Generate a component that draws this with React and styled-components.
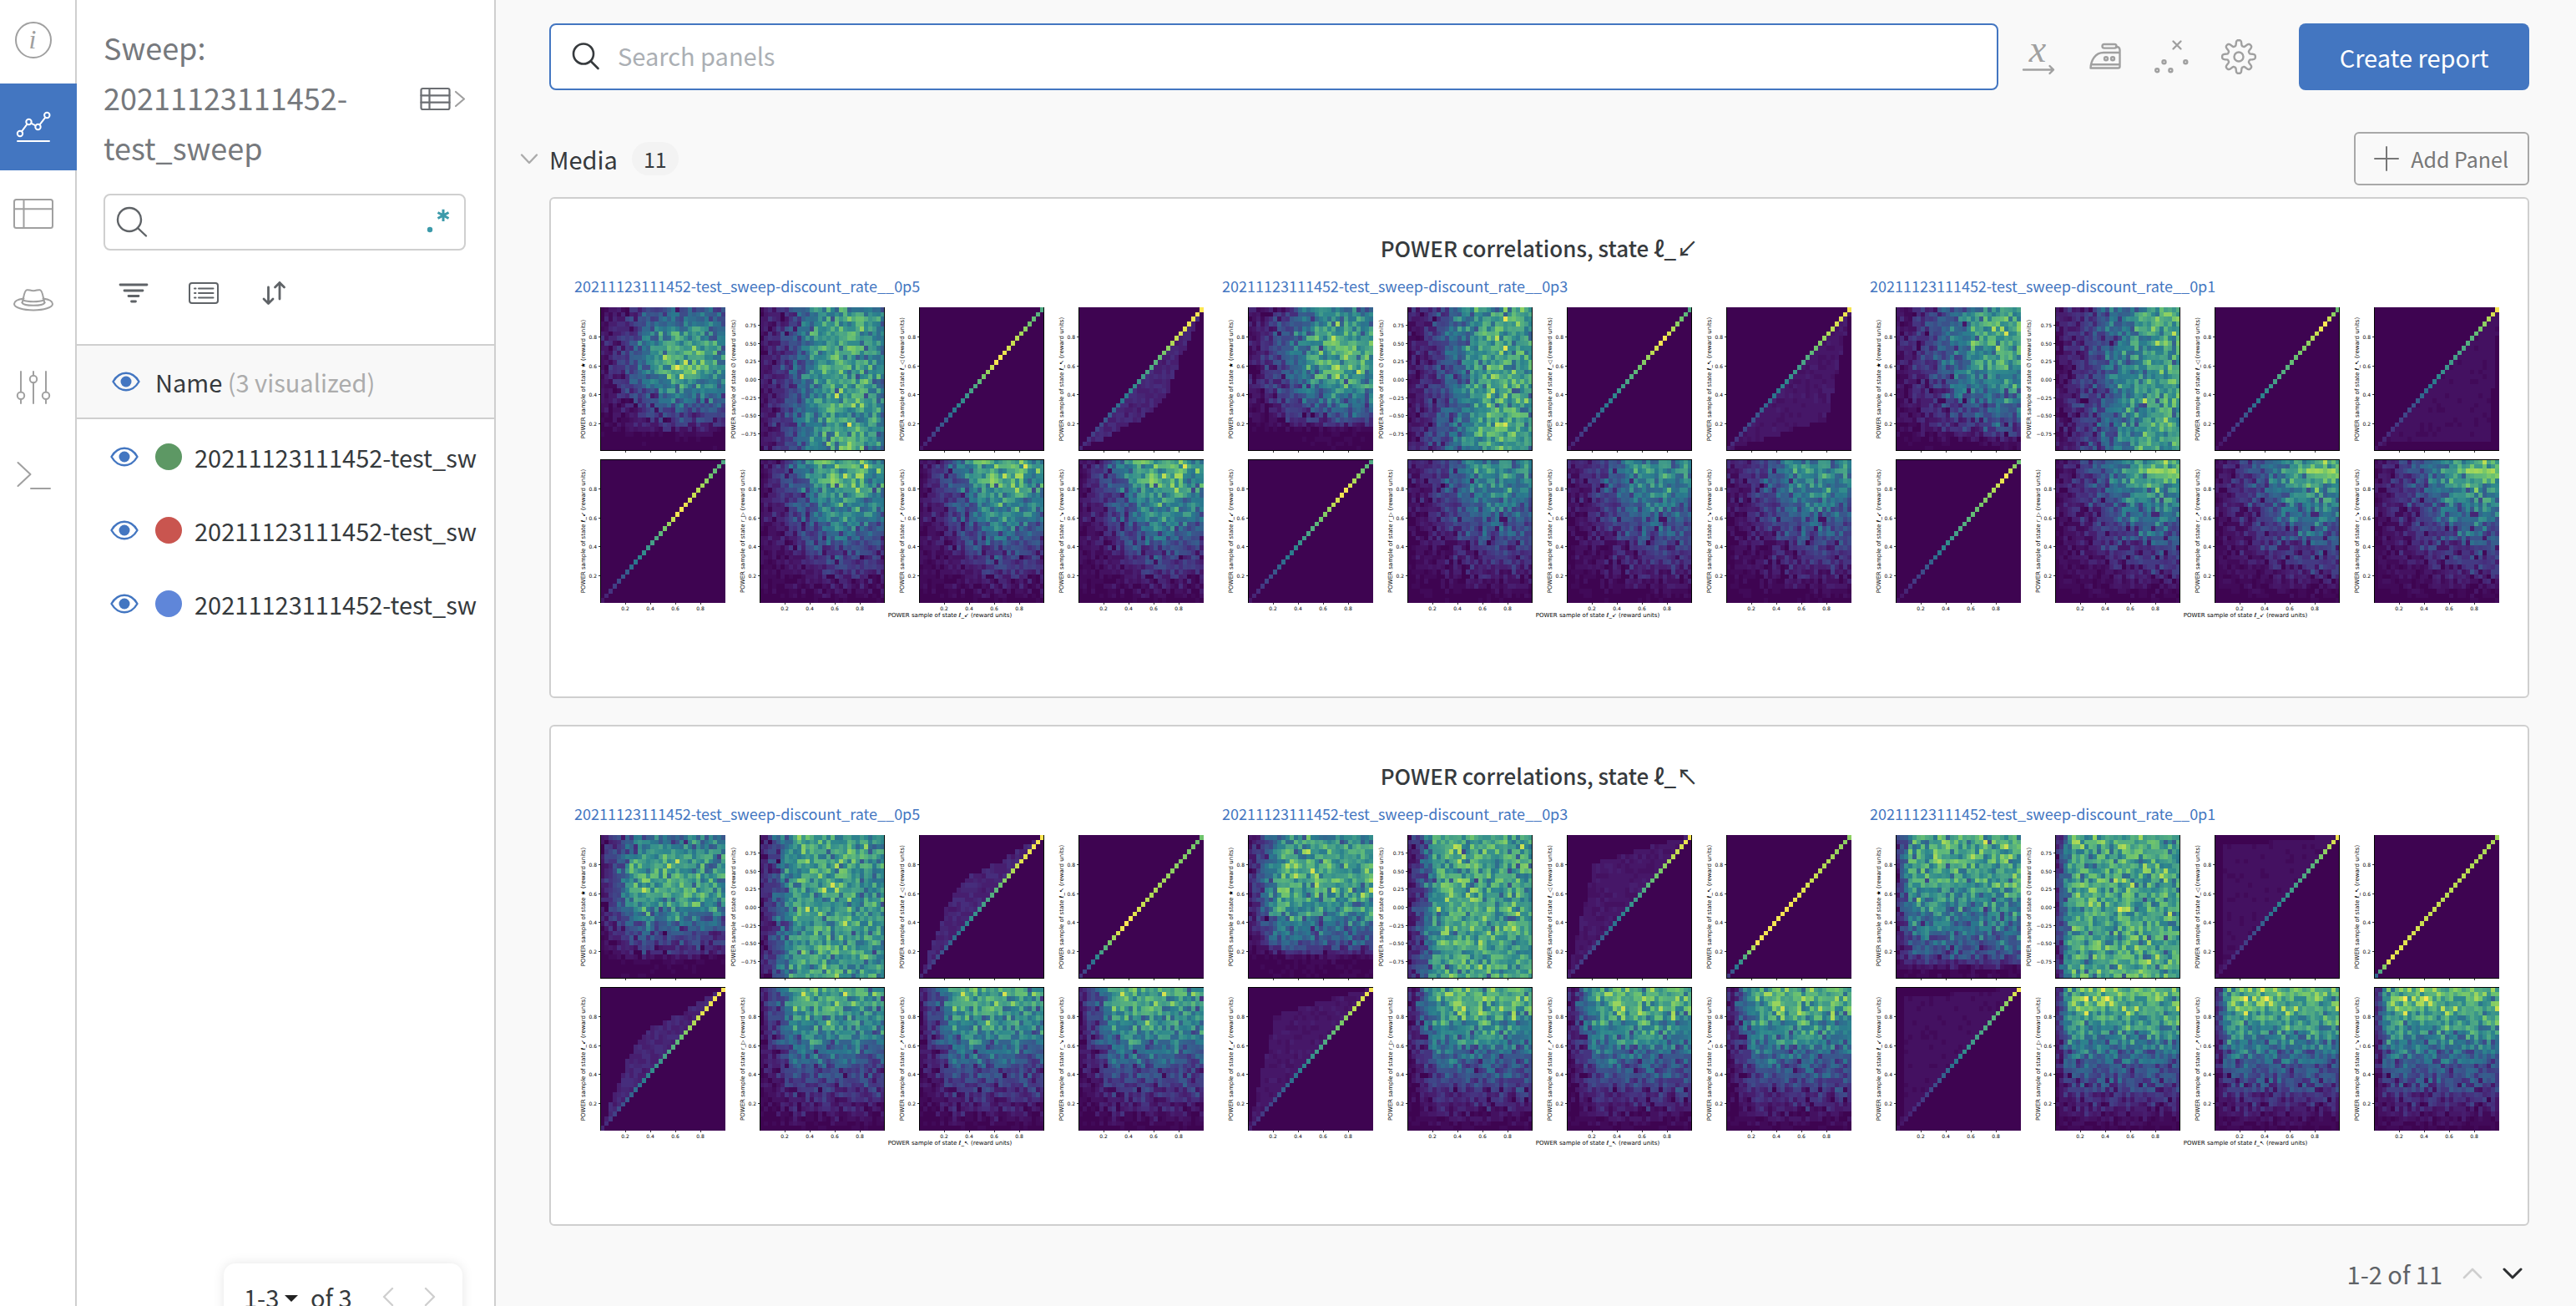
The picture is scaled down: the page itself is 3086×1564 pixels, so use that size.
import React from "react";
import styled, { createGlobalStyle } from "styled-components";

/* ---------- theme values ---------- */

const font = '"Noto Sans CJK SC", "Noto Sans", sans-serif';
const c = {
  blue: "#4376c1",
  line: "#cfcfcf",
  page: "#f9f9f9",
  ink: "#363a3d",
  mid: "#5f6367",
  soft: "#76797d",
  icon: "#a0a0a0",
};

const Global = createGlobalStyle`
  *, *::before, *::after { box-sizing: border-box; }
  body { margin: 0; background: ${c.page}; font-family: ${font}; color: ${c.ink}; }
  button, input, select { font: inherit; color: inherit; }
  svg { display: block; flex: none; overflow: visible; }
`;

/* ---------- heat map data ---------- */

const N = 30;
const VIRIDIS = [
  [62, 4, 81], [71, 24, 106], [70, 48, 126], [64, 68, 135], [57, 86, 140],
  [49, 104, 142], [42, 120, 142], [47, 137, 141], [62, 152, 138], [78, 168, 132],
  [94, 184, 122], [112, 196, 108], [145, 210, 96], [182, 220, 84], [224, 227, 78], [254, 230, 84],
];

function viridis(t) {
  const x = Math.min(1, Math.max(0, t)) * (VIRIDIS.length - 1);
  const i = Math.min(VIRIDIS.length - 2, Math.floor(x));
  const f = x - i;
  const mix = VIRIDIS[i].map((v, k) => Math.round(v + (VIRIDIS[i + 1][k] - v) * f));
  return `rgb(${mix.join(",")})`;
}

function random(seed) {
  let a = seed >>> 0;
  return () => {
    a = (a + 0x6d2b79f5) >>> 0;
    let t = a;
    t = Math.imul(t ^ (t >>> 15), t | 1);
    t ^= t + Math.imul(t ^ (t >>> 7), t | 61);
    return ((t ^ (t >>> 14)) >>> 0) / 4294967296;
  };
}

const bell = (x, [m, left, right]) => Math.exp(-(((x - m) / (x < m ? left : right)) ** 2) / 2);

function lerp(points, x) {
  for (let i = 1; i < points.length; i++) {
    const [x0, y0] = points[i - 1];
    const [x1, y1] = points[i];
    if (x <= x1) return y0 + ((y1 - y0) * (x - x0)) / (x1 - x0);
  }
  return points[points.length - 1][1];
}

function scatter(seed, density, amp) {
  const rnd = random(seed);
  const cells = [];
  for (let j = 0; j < N; j++) {
    for (let i = 0; i < N; i++) {
      const noise = rnd() + rnd() + rnd() + rnd() - 2;
      const d = density((i + 0.5) / N, (j + 0.5) / N);
      cells.push(Math.max(0, amp * d + noise * 0.3 * Math.sqrt(d * amp)));
    }
  }
  return cells;
}

function diagonal(seed, ramp, hull) {
  const rnd = random(seed);
  const cells = [];
  for (let j = 0; j < N; j++) {
    for (let i = 0; i < N; i++) {
      const x = (i + 0.5) / N;
      const y = (j + 0.5) / N;
      let v = 0;
      if (i === j) v = lerp(ramp, x);
      else if (hull) {
        const a = hull.above ? y : x;
        const b = hull.above ? x : y;
        if (a > b && b > lerp(hull.edge, a)) v = hull.level * (0.7 + rnd() * 0.6);
      }
      cells.push(v);
    }
  }
  return cells;
}

const RUNS = [
  { id: "0p5", name: "20211123111452-test_sweep-discount_rate__0p5", color: "#5d9864" },
  { id: "0p3", name: "20211123111452-test_sweep-discount_rate__0p3", color: "#c9554f" },
  { id: "0p1", name: "20211123111452-test_sweep-discount_rate__0p1", color: "#5f86d9" },
];

const HULLS = [
  { level: 0.1, edge: [[0, 0], [0.5, 0.22], [0.7, 0.37], [0.8, 0.62], [1, 1]] },
  { level: 0.06, edge: [[0, 0], [0.8, 0.22], [0.9, 0.6], [1, 1]] },
  { level: 0.04, edge: [[0, 0], [0.1, 0.05], [0.92, 0.07], [1, 1]] },
];

const PANELS = [
  {
    key: "dl", arrow: "↙", spread: [3],
    x: [[0.66, 0.28, 0.38], [0.76, 0.34, 0.36], [0.9, 0.4, 0.3]],
    y: [[0.62, 0.24, 0.28], [0.64, 0.28, 0.36], [0.84, 0.48, 0.25]],
    center: [0.66, 0.66, 0.62],
    amp: [0.68, 0.5, 0.64],
    plain: [
      [[0, 0.05], [0.2, 0.28], [0.45, 0.6], [0.63, 1], [0.8, 0.85], [1, 0.58]],
      [[0, 0.05], [0.2, 0.25], [0.5, 0.6], [0.77, 1], [0.9, 0.75], [1, 0.58]],
      [[0, 0.03], [0.2, 0.2], [0.5, 0.58], [0.75, 0.8], [0.88, 1], [1, 0.65]],
    ],
    wide: [
      [[0, 0.08], [0.3, 0.34], [0.6, 0.62], [0.8, 0.92], [1, 1]],
      [[0, 0.08], [0.3, 0.32], [0.6, 0.56], [0.8, 0.84], [1, 1]],
      [[0, 0.04], [0.3, 0.24], [0.6, 0.54], [0.8, 0.66], [1, 1]],
    ],
  },
  {
    key: "ul", arrow: "↖", spread: [2, 4],
    x: [[0.38, 0.18, 0.9], [0.32, 0.15, 1.8], [0.16, 0.08, 3]],
    y: [[0.66, 0.25, 0.33], [0.7, 0.34, 0.36], [0.88, 0.52, 0.5]],
    center: [0.62, 0.62, 0.6],
    amp: [0.62, 0.64, 0.66],
    plain: [
      [[0, 0.1], [0.1, 0.32], [0.3, 0.88], [0.37, 1], [0.6, 0.85], [1, 0.72]],
      [[0, 0.1], [0.1, 0.45], [0.25, 0.98], [0.5, 0.98], [0.8, 0.85], [1, 0.78]],
      [[0, 0.2], [0.05, 0.6], [0.12, 0.96], [0.4, 0.9], [1, 0.84]],
    ],
    wide: [
      [[0, 0.08], [0.3, 0.36], [0.6, 0.64], [0.8, 0.93], [1, 1]],
      [[0, 0.08], [0.3, 0.3], [0.6, 0.58], [0.8, 0.82], [1, 1]],
      [[0, 0.04], [0.3, 0.22], [0.6, 0.52], [0.8, 0.66], [1, 1]],
    ],
  },
];

const FLOOR = [0.1, 0.14, 0.06];

function buildPlots(panel, p, r) {
  const seed = 1000 * (p + 1) + 100 * r;
  const gx = (x) => bell(x, panel.x[r]);
  const edge = (y) => Math.min(1, Math.max(0.05, (y - FLOOR[r]) / 0.08));
  const diag = (k) =>
    panel.spread.includes(k)
      ? diagonal(seed + k, panel.wide[r], { ...HULLS[r], above: p === 1 })
      : diagonal(seed + k, panel.plain[r]);
  const rise = scatter(seed + 9, (x, y) => gx(x) * Math.min(1, y * 1.12) ** 1.25, panel.amp[r]);
  return [
    scatter(seed, (x, y) => gx(x) * bell(y, panel.y[r]) * edge(y), panel.center[r]),
    scatter(seed + 1, (x) => gx(x), 0.58),
    diag(2), diag(3), diag(4), rise, rise, rise,
  ];
}

const LEVELS = 48;

function cellPaths(cells, x0, y0, w, h) {
  const groups = {};
  const px = (i) => x0 + Math.round((i * w) / N);
  const py = (j) => y0 + h - Math.round((j * h) / N);
  cells.forEach((v, k) => {
    const level = Math.round(Math.min(1, v) * LEVELS);
    if (!level) return;
    const i = k % N;
    const j = Math.floor(k / N);
    const d = `M${px(i)} ${py(j + 1)}H${px(i + 1)}V${py(j)}H${px(i)}Z`;
    groups[level] = (groups[level] || "") + d;
  });
  return Object.entries(groups);
}

/* ---------- figure ---------- */

const STATES = ["★", "∅", "ℓ_◁", "ℓ_↖", "ℓ_↙", "r_▷", "r_↗", "r_↘"];
const W = 150;
const H = 172;
const FIFTHS = [0.2, 0.4, 0.6, 0.8];
const SIGNED = ["−0.75", "−0.50", "−0.25", "0.00", "0.25", "0.50", "0.75"];

const FigureSvg = styled.svg`
  width: 100%;
  height: auto;
`;

const TickText = styled.text`
  font-family: "DejaVu Sans", sans-serif;
  font-size: 6px;
  fill: #000;
`;

const AxisText = styled(TickText)`
  font-size: 7px;
`;

function Plot({ index, cells }) {
  const col = index % 4;
  const row = Math.floor(index / 4);
  const x = 31 + 191 * col;
  const y = 2 + 182 * row;
  const signed = index === 1;
  const labelX = x - (signed ? 29 : 18);
  const labelY = y + H / 2;
  const yTicks = signed
    ? SIGNED.map((t, i) => [t, y + H / 2 - (i - 3) * 21.6])
    : FIFTHS.map((t) => [t.toFixed(1), y + H + 1 - t * H]);
  return (
    <g>
      <g shapeRendering="crispEdges">
        <rect x={x} y={y} width={W} height={H} fill={viridis(0)} />
        {cellPaths(cells, x, y, W, H).map(([level, d]) => (
          <path key={level} d={d} fill={viridis(level / LEVELS)} />
        ))}
        <rect x={x} y={y} width={1} height={H} fill="#000" />
        {(col === 1 || col === 2) && <rect x={x + W - 1} y={y} width={1} height={H} fill="#000" />}
        <rect x={x} y={row ? y : y + H - 1} width={W} height={1} fill="#000" />
        {FIFTHS.map((t) => (
          <rect key={t} x={Math.round(x + t * W)} y={y + H} width={1} height={2} fill="#333" />
        ))}
        {yTicks.map(([t, ty]) => (
          <rect key={t} x={x - 2} y={Math.round(ty)} width={2} height={1} fill="#333" />
        ))}
      </g>
      {yTicks.map(([t, ty]) => (
        <TickText key={t} x={x - 4} y={Math.round(ty) + 3} textAnchor="end">{t}</TickText>
      ))}
      {row === 1 && FIFTHS.map((t) => (
        <TickText key={t} x={Math.round(x + t * W)} y={H + 193} textAnchor="middle">{t.toFixed(1)}</TickText>
      ))}
      <AxisText x={labelX} y={labelY} textAnchor="middle" transform={`rotate(-90 ${labelX} ${labelY})`}>
        POWER sample of state {STATES[index]} (reward units)
      </AxisText>
    </g>
  );
}

function Figure({ panel, p, r }) {
  const plots = React.useMemo(() => buildPlots(panel, p, r), [panel, p, r]);
  return (
    <FigureSvg viewBox="0 0 760 376" role="img" aria-label={`Correlation heat maps ${RUNS[r].id}`}>
      {plots.map((cells, i) => <Plot key={i} index={i} cells={cells} />)}
      <AxisText x={450} y={373} textAnchor="middle">
        POWER sample of state ℓ_{panel.arrow} (reward units)
      </AxisText>
    </FigureSvg>
  );
}

/* ---------- icons ---------- */

const Icon = ({ w = 48, h = w, sw = 2, color = c.icon, children }) => (
  <svg width={w} height={h} viewBox={`0 0 ${w} ${h}`} fill="none" stroke={color} strokeWidth={sw}
    strokeLinecap="round" strokeLinejoin="round" aria-hidden="true">
    {children}
  </svg>
);

const Glyph = styled.text`
  font-family: "Liberation Serif", serif;
  font-style: italic;
  font-size: ${(p) => p.$size}px;
  fill: ${c.icon};
  stroke: none;
  text-anchor: middle;
`;

const InfoIcon = () => (
  <Icon><circle cx="24" cy="24" r="21" /><Glyph $size={32} x="23" y="34">i</Glyph></Icon>
);
const ChartIcon = () => (
  <Icon color="#fff">
    <circle cx="8" cy="32" r="3.2" /><circle cx="18.5" cy="18" r="3.2" />
    <circle cx="29.5" cy="24" r="3.2" /><circle cx="40.3" cy="10" r="3.2" />
    <path d="M10 29.4 16.5 20.6M21.3 19.6 26.7 22.4M31.5 21.4 38.3 12.6M5 41H43" />
  </Icon>
);
const TableIcon = () => (
  <Icon><rect x="1" y="7" width="46" height="34" rx="2.5" /><path d="M12.5 7V41M1 18.3H47" /></Icon>
);
const HatIcon = () => (
  <Icon>
    <path d="M12.5 21.5C5 22.5 1 25 1 28c0 4.2 10.3 7.500 23 7.500S47 32.200 47 28c0-3-4-5.500-11.500-6.500" />
    <path d="M10.500 26.500C12 24 12.500 12 16 11.300c3-.8 4 .9 8 .9s5-1.700 8-.9c3.500.7 4 12.700 5.500 15.200" />
    <path d="M11.500 23.500c6 2.300 19 2.300 25 0M10.500 26.500c1 2.200 6.500 3.300 13.500 3.300s12.500-1.100 13.500-3.300" />
  </Icon>
);
const SlidersIcon = () => (
  <Icon>
    <circle cx="9" cy="33.7" r="4.2" /><circle cx="24" cy="14" r="4.2" /><circle cx="39" cy="33.7" r="4.2" />
    <path d="M9 5V29.5M9 38V43M24 5V9.8M24 18.2V43M39 5V29.5M39 38V43" />
  </Icon>
);
const TerminalIcon = () => <Icon><path d="M5.5 10 20.5 24 5.5 38M21 41H44" /></Icon>;

const SearchIcon = ({ color }) => (
  <Icon w={40} sw={2.4} color={color}><circle cx="17" cy="17" r="14" /><path d="M27.5 27.5 37 36.5" /></Icon>
);
const PanelSearchIcon = () => (
  <Icon w={32} sw={2.6} color={c.ink}><circle cx="13" cy="12.500" r="12" /><path d="M22 21.5 30.500 30" /></Icon>
);
const RegexIcon = () => (
  <Icon w={32} sw={3} color="#3c9aaa">
    <circle cx="5" cy="25" r="3.2" fill="#3c9aaa" stroke="none" />
    <path d="M21 .8V15M14.5 4.5 27.5 11.5M27.5 4.5 14.5 11.5" strokeLinecap="butt" />
  </Icon>
);
const GridIcon = () => (
  <Icon w={56} h={32} sw={2.2} color="#6b6e72">
    <rect x="2.500" y="6" width="34" height="25" rx="2" /><path d="M12.500 6V31M2.500 14.300H36.500M2.500 22.700H36.500" />
    <path d="M44 10 54 18.500 44 27" stroke={c.icon} />
  </Icon>
);
const FilterIcon = () => (
  <Icon w={36} h={28} sw={2.8} color={c.mid}><path d="M2 4H34M7 11H29M12 17.5H24M15.5 24H20.5" /></Icon>
);
const ListIcon = () => (
  <Icon w={36} h={28} color={c.mid}>
    <rect x="1" y="2" width="34" height="24" rx="3" />
    <path d="M7 8.5H8.5M12 8.5H29.5M7 14H8.5M12 14H29.5M7 19.5H8.5M12 19.5H29.5" />
  </Icon>
);
const SortIcon = () => (
  <Icon w={36} h={28} sw={2.8} color={c.mid}>
    <path d="M11.500 7V26M6 21 11.500 26.500 17 21M25 21V1.500M19.500 7 25 1.500 30.500 7" />
  </Icon>
);
const EyeIcon = () => (
  <Icon w={34} h={24} sw={2.4} color={c.blue}>
    <path d="M1.5 12C5 6 10 1.800 17 1.800S29 6 32.500 12C29 18 24 22.200 17 22.200S5 18 1.500 12Z" />
    <circle cx="17" cy="12" r="6.5" fill={c.blue} stroke="none" />
  </Icon>
);
const Chevron = ({ d, w, h, color, sw = 2.4 }) => <Icon w={w} h={h} sw={sw} color={color}><path d={d} /></Icon>;

const AxisIcon = () => (
  <Icon sw={2.4}>
    <Glyph $size={46} x="23" y="30">x</Glyph>
    <path d="M6 39.5H42M37.5 35 42 39.5 37.5 44" />
  </Icon>
);
const IronIcon = () => (
  <Icon sw={2.4}>
    <path d="M6.5 37.5C7 28 12 19 22 19H41.5M37 12c3 0 4.500 1 4.500 4V35.500c0 1.500-.5 2-2 2H6.500M7 33.300H41.500" />
    <rect x="20.5" y="9" width="17" height="4.6" rx="2.3" />
    <circle cx="25" cy="26.3" r="2" /><circle cx="33" cy="26.3" r="2" />
  </Icon>
);
const ScatterIcon = () => (
  <Icon sw={2.4}>
    <path d="M25.5 5.5 34.5 14.5M34.5 5.5 25.5 14.5" />
    <circle cx="14.5" cy="30.3" r="2" /><circle cx="40.3" cy="30.3" r="2" />
    <circle cx="6.2" cy="40.3" r="2" /><circle cx="22.4" cy="40.3" r="2" />
  </Icon>
);
const GEAR = Array.from({ length: 160 }, (_, k) => {
  const a = (k / 160) * Math.PI * 2;
  const r = 16.6 + 3.4 * Math.tanh(2 * Math.cos(8 * a));
  return `${(24 + r * Math.sin(a)).toFixed(1)} ${(24 - r * Math.cos(a)).toFixed(1)}`;
}).join("L");
const GearIcon = () => <Icon sw={2.4}><path d={`M${GEAR}Z`} /><circle cx="24" cy="24" r="5.5" /></Icon>;

/* ---------- layout ---------- */

const Shell = styled.div`
  display: flex;
  height: 100vh;
  overflow: hidden;
`;

const Nav = styled.nav`
  flex: none;
  width: 92px;
  margin-top: -4px;
  background: #fff;
  border-right: 2px solid ${c.line};
`;

const NavLink = styled.a`
  display: flex;
  align-items: center;
  height: 104px;
  margin-right: -2px;
  padding-left: 16px;
  background: ${(p) => (p.$active ? c.blue : "transparent")};
  border-right: 2px solid ${(p) => (p.$active ? c.blue : c.line)};
`;

const Sidebar = styled.aside`
  position: relative;
  display: flex;
  flex-direction: column;
  flex: none;
  width: 502px;
  background: #fff;
  border-right: 2px solid ${c.line};
`;

const SidebarTop = styled.div`
  padding: 26px 34px 0 32px;
`;

const SweepHead = styled.div`
  display: flex;
  align-items: center;
  justify-content: space-between;
  margin-bottom: 26px;
`;

const SweepTitle = styled.h1`
  width: 320px;
  margin: 0;
  font-size: 36px;
  font-weight: 400;
  line-height: 60px;
  color: ${c.soft};
`;

const IconButton = styled.button`
  display: flex;
  align-items: center;
  justify-content: center;
  padding: 0;
  border: 0;
  background: none;
  cursor: pointer;
`;

const SearchBox = styled.label`
  display: flex;
  align-items: center;
  height: 68px;
  padding: 0 14px 0 12px;
  border: 2px solid ${c.line};
  border-radius: 8px;
  background: #fff;
`;

const TextInput = styled.input`
  flex: 1;
  min-width: 0;
  padding: 0 0 4px;
  border: 0;
  outline: 0;
  background: none;
  font-size: 29px;
  line-height: 40px;
  &::placeholder { color: #abafb4; opacity: 1; }
`;

const Tools = styled.div`
  display: flex;
  align-items: center;
  gap: 48px;
  height: 102px;
  margin-bottom: 10px;
  padding-left: 18px;
`;

const RunHeader = styled.div`
  display: flex;
  align-items: center;
  gap: 18px;
  height: 90px;
  padding-left: 42px;
  border-top: 2px solid ${c.line};
  border-bottom: 2px solid ${c.line};
  background: #f8f8f8;
  font-size: 29px;
`;

const Muted = styled.span`
  color: #acacac;
`;

const RunList = styled.ul`
  margin: 1px 0 0;
  padding: 0 20px 0 40px;
  list-style: none;
`;

const RunRow = styled.li`
  display: flex;
  align-items: center;
  height: 88px;
`;

const Dot = styled.span`
  flex: none;
  width: 32px;
  height: 32px;
  margin: 0 15px 0 20px;
  border-radius: 50%;
  background: ${(p) => p.$color};
`;

const RunLink = styled.a`
  flex: none;
  width: 340px;
  overflow: hidden;
  white-space: nowrap;
  font-size: 29px;
  line-height: 44px;
  color: ${c.ink};
  text-decoration: none;
`;

const RunPager = styled.div`
  position: absolute;
  right: 38px;
  bottom: -29px;
  display: flex;
  align-items: center;
  width: 286px;
  height: 80px;
  padding-left: 24px;
  border-radius: 14px;
  background: #fff;
  box-shadow: 0 0 14px rgba(0, 0, 0, 0.1);
  font-size: 29px;
  line-height: 40px;
`;

const RangeSelect = styled.select`
  appearance: none;
  padding: 0;
  border: 0;
  background: none;
`;

const PagerCaret = styled.span`
  margin: 4px 15px 0 6px;
  border: 8px solid transparent;
  border-top-color: #222;
  border-bottom: 0;
`;

const PagerArrows = styled.div`
  display: flex;
  gap: 36px;
  margin-left: 36px;
`;

const Main = styled.main`
  flex: 1;
  min-width: 0;
  padding: 28px 56px 0 64px;
  background: ${c.page};
`;

const TopBar = styled.div`
  display: flex;
  align-items: center;
`;

const PanelSearch = styled(SearchBox)`
  flex: 1;
  gap: 22px;
  height: 80px;
  padding: 0 26px;
  border-color: ${c.blue};
`;

const TopIcons = styled.div`
  display: flex;
  gap: 32px;
  margin: 0 48px 0 24px;
`;

const CreateButton = styled.button`
  width: 276px;
  height: 80px;
  border: 0;
  border-radius: 8px;
  background: ${c.blue};
  color: #fff;
  font-size: 29px;
`;

const SectionHead = styled.div`
  display: flex;
  align-items: center;
  height: 64px;
  margin: 50px 0 14px -36px;
`;

const SectionTitle = styled.h2`
  margin: 0 17px 0 12px;
  font-size: 29px;
  font-weight: 400;
  line-height: 40px;
`;

const Count = styled.span`
  padding: 0 14px;
  border-radius: 20px;
  background: #f3f3f3;
  font-size: 25px;
  line-height: 40px;
`;

const AddButton = styled.button`
  display: flex;
  align-items: center;
  gap: 14px;
  height: 64px;
  margin-left: auto;
  padding: 0 23px 0 22px;
  border: 2px solid #a8a8a8;
  border-radius: 6px;
  background: none;
  font-size: 25px;
  color: #777;
`;

const Cards = styled.div`
  display: grid;
  gap: 32px;
`;

const Card = styled.section`
  height: 600px;
  padding: 40px 28px 0;
  border: 2px solid ${c.line};
  border-radius: 6px;
  background: #fff;
`;

const CardTitle = styled.h3`
  margin: 0 0 14px;
  font-size: 26px;
  font-weight: 500;
  line-height: 38px;
  text-align: center;
`;

const Figures = styled.div`
  display: grid;
  grid-template-columns: repeat(3, 1fr);
  gap: 16px;
`;

const FigureLink = styled.a`
  display: block;
  margin-bottom: 12px;
  font-size: 18px;
  line-height: 24px;
  color: ${c.blue};
  text-decoration: none;
`;

const Footer = styled.div`
  display: flex;
  align-items: center;
  justify-content: flex-end;
  gap: 24px;
  height: 114px;
  padding-right: 8px;
  font-size: 29px;
  color: ${c.mid};
`;

const NAV = [
  ["Overview", InfoIcon], ["Charts", ChartIcon], ["Table", TableIcon],
  ["Sweep agents", HatIcon], ["Controls", SlidersIcon], ["Logs", TerminalIcon],
];

export default function App() {
  return (
    <>
      <Global />
      <Shell>
        <Nav>
          {NAV.map(([label, Ico], i) => (
            <NavLink key={label} href="#" aria-label={label} $active={i === 1}><Ico /></NavLink>
          ))}
        </Nav>

        <Sidebar>
          <SidebarTop>
            <SweepHead>
              <SweepTitle>Sweep: 20211123111452-test_sweep</SweepTitle>
              <IconButton aria-label="Expand table"><GridIcon /></IconButton>
            </SweepHead>
            <SearchBox>
              <SearchIcon color={c.mid} />
              <TextInput type="text" aria-label="Search runs" />
              <RegexIcon />
            </SearchBox>
            <Tools>
              <IconButton aria-label="Filter"><FilterIcon /></IconButton>
              <IconButton aria-label="Group"><ListIcon /></IconButton>
              <IconButton aria-label="Sort"><SortIcon /></IconButton>
            </Tools>
          </SidebarTop>
          <RunHeader>
            <IconButton aria-label="Toggle all runs"><EyeIcon /></IconButton>
            <span>Name <Muted>(3 visualized)</Muted></span>
          </RunHeader>
          <RunList>
            {RUNS.map((run) => (
              <RunRow key={run.id}>
                <IconButton aria-label="Toggle run"><EyeIcon /></IconButton>
                <Dot $color={run.color} />
                <RunLink href="#" title={run.name}>20211123111452-test_sw</RunLink>
              </RunRow>
            ))}
          </RunList>
          <RunPager>
            <RangeSelect aria-label="Run range"><option>1-3</option></RangeSelect>
            <PagerCaret />
            <span>of 3</span>
            <PagerArrows>
              <IconButton aria-label="Previous runs"><Chevron w={14} h={24} d="M12 2 2 12 12 22" color="#cfcfcf" /></IconButton>
              <IconButton aria-label="Next runs"><Chevron w={14} h={24} d="M2 2 12 12 2 22" color="#cfcfcf" /></IconButton>
            </PagerArrows>
          </RunPager>
        </Sidebar>

        <Main>
          <TopBar>
            <PanelSearch>
              <PanelSearchIcon />
              <TextInput type="text" placeholder="Search panels" aria-label="Search panels" />
            </PanelSearch>
            <TopIcons>
              <IconButton aria-label="X axis"><AxisIcon /></IconButton>
              <IconButton aria-label="Smoothing"><IronIcon /></IconButton>
              <IconButton aria-label="Outliers"><ScatterIcon /></IconButton>
              <IconButton aria-label="Settings"><GearIcon /></IconButton>
            </TopIcons>
            <CreateButton>Create report</CreateButton>
          </TopBar>

          <SectionHead>
            <IconButton aria-label="Collapse section"><Chevron w={24} h={16} d="M3 3.5 12 13 21 3.5" color="#ababab" /></IconButton>
            <SectionTitle>Media</SectionTitle>
            <Count>11</Count>
            <AddButton>
              <Icon w={30} sw={2} color="#777"><path d="M15 1V29M1 15H29" /></Icon>
              Add Panel
            </AddButton>
          </SectionHead>

          <Cards>
            {PANELS.map((panel, p) => (
              <Card key={panel.key}>
                <CardTitle>POWER correlations, state ℓ_{panel.arrow}</CardTitle>
                <Figures>
                  {RUNS.map((run, r) => (
                    <div key={run.id}>
                      <FigureLink href="#">{run.name}</FigureLink>
                      <Figure panel={panel} p={p} r={r} />
                    </div>
                  ))}
                </Figures>
              </Card>
            ))}
          </Cards>

          <Footer>
            <span>1-2 of 11</span>
            <IconButton aria-label="Previous panels"><Chevron w={24} h={16} sw={2.6} d="M2 13 12 3 22 13" color="#cfcfcf" /></IconButton>
            <IconButton aria-label="Next panels"><Chevron w={24} h={16} sw={3} d="M2 3 12 13 22 3" color="#2d2f31" /></IconButton>
          </Footer>
        </Main>
      </Shell>
    </>
  );
}
